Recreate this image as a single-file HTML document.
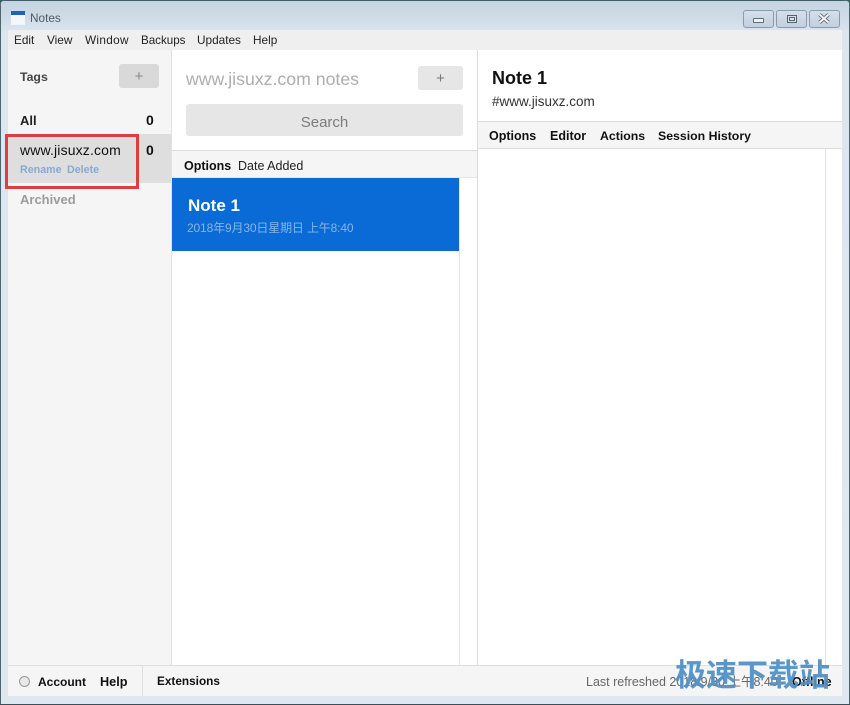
<!DOCTYPE html>
<html lang="en">
<head>
<meta charset="utf-8">
<title>Notes</title>
<style>
html,body{margin:0;padding:0;width:850px;height:705px;overflow:hidden;background:#37605f}
#w{position:relative;width:850px;height:705px;overflow:hidden;font-family:"Liberation Sans","Noto Sans CJK SC",sans-serif;color:#111;
background:linear-gradient(#c3d3e0 0,#d0dde8 20px,#dbe6ef 32px,#dfe8f1 100%);border-radius:6px 6px 0 0}
#w div{position:absolute;white-space:nowrap}
.t{line-height:1}
.b{font-weight:700}
.btn{background:#e6e6e6;border-radius:3px}
.wb{top:10px;height:16px;width:29px;border:1px solid #8b9bae;border-radius:3px;background:linear-gradient(#d4e0ea,#c2d0dd)}
.plus{color:#777;font-size:15px;line-height:1;text-align:center}
</style>
</head>
<body>
<div id="w">
  <div style="left:0;top:0;width:850px;height:1px;background:#3f5f63"></div>
  <div style="left:0;top:0;width:1px;height:705px;background:#4d6770"></div>
  <div style="left:849px;top:0;width:1px;height:705px;background:#4d6770"></div>
  <div style="left:0;top:704px;width:850px;height:1px;background:#3c4f58"></div>

  <div style="left:11px;top:11px;width:14px;height:4px;background:#1f62b4"></div>
  <div style="left:11px;top:15px;width:14px;height:10px;background:#f4f6f8"></div>
  <div class="t" style="left:30px;top:13px;font-size:11.8px;color:#4f5a65">Notes</div>

  <div class="wb" style="left:743px"></div>
  <div style="left:753px;top:18px;width:9px;height:3px;border:1px solid #5f6c78;background:#eef2f5;border-radius:1px"></div>
  <div class="wb" style="left:776px"></div>
  <div style="left:787px;top:15px;width:8px;height:6px;border:1px solid #55626e;background:#dbe4ec"></div>
  <div style="left:789px;top:17px;width:4px;height:2px;border:1px solid #55626e"></div>
  <div class="wb" style="left:809px"></div>
  <svg style="position:absolute;left:818px;top:13px" width="12" height="11" viewBox="0 0 12 11"><path d="M1.5 1.5L10.5 9.5M10.5 1.5L1.5 9.5" stroke="#5f6c78" stroke-width="3.8"/><path d="M1.5 1.5L10.5 9.5M10.5 1.5L1.5 9.5" stroke="#f2f5f7" stroke-width="1.9"/></svg>

  <div style="left:8px;top:30px;width:834px;height:20px;background:#efefef"></div>
  <div class="t" style="left:14px;top:35px;font-size:11.8px;color:#222">Edit</div>
  <div class="t" style="left:47px;top:35px;font-size:11.8px;color:#222">View</div>
  <div class="t" style="left:85px;top:35px;font-size:11.8px;color:#222;letter-spacing:.3px">Window</div>
  <div class="t" style="left:141px;top:35px;font-size:11.6px;color:#222">Backups</div>
  <div class="t" style="left:197px;top:35px;font-size:11.8px;color:#222">Updates</div>
  <div class="t" style="left:253px;top:35px;font-size:11.8px;color:#222">Help</div>

  <div style="left:8px;top:50px;width:834px;height:646px;background:#fff"></div>

  <!-- Tags column -->
  <div style="left:8px;top:50px;width:163px;height:615px;background:#f5f5f5;border-right:1px solid #e2e2e2"></div>
  <div class="t b" style="left:20px;top:71px;font-size:12.3px;color:#444">Tags</div>
  <div style="left:119px;top:64px;width:40px;height:24px;background:#d9d9d9;border-radius:3px"></div>
  <div class="plus" style="left:119px;top:69px;width:40px;color:#888">+</div>
  <div class="t b" style="left:20px;top:114px;font-size:13px;color:#222">All</div>
  <div class="t b" style="left:146px;top:113px;font-size:14px">0</div>
  <div style="left:8px;top:134px;width:163px;height:49px;background:#dedede"></div>
  <div class="t" style="left:20px;top:143px;font-size:14px;color:#111;letter-spacing:.15px">www.jisuxz.com</div>
  <div class="t b" style="left:146px;top:143px;font-size:14px">0</div>
  <div class="t b" style="left:20px;top:165px;font-size:10.7px;color:#8aa9d2">Rename</div>
  <div class="t b" style="left:67px;top:165px;font-size:10.7px;color:#8aa9d2">Delete</div>
  <div style="left:5px;top:134px;width:128px;height:49px;border:3px solid #dc3e42"></div>
  <div class="t b" style="left:20px;top:193px;font-size:13px;color:#9b9b9b">Archived</div>

  <!-- Notes column -->
  <div class="t" style="left:186px;top:71px;font-size:17.7px;color:#aeaeae">www.jisuxz.com notes</div>
  <div class="btn" style="left:418px;top:66px;width:45px;height:24px"></div>
  <div class="plus" style="left:418px;top:71px;width:45px">+</div>
  <div class="btn" style="left:186px;top:104px;width:277px;height:32px"></div>
  <div class="t" style="left:186px;top:115px;width:277px;text-align:center;font-size:15px;color:#7c7c7c">Search</div>
  <div style="left:172px;top:150px;width:305px;height:26px;background:#f5f5f5;border-top:1px solid #dedede;border-bottom:1px solid #e6e6e6"></div>
  <div class="t b" style="left:184px;top:160px;font-size:12.5px;color:#111">Options</div>
  <div class="t" style="left:238px;top:160px;font-size:12.5px;color:#222">Date Added</div>
  <div style="left:172px;top:178px;width:287px;height:73px;background:#0a6bd6"></div>
  <div class="t b" style="left:188px;top:197px;font-size:17px;color:#fff">Note 1</div>
  <div class="t" style="left:187px;top:222px;font-size:12px;color:#86b5e8;letter-spacing:-.15px">2018年9月30日星期日 上午8:40</div>
  <div style="left:459px;top:178px;width:1px;height:487px;background:#e6e6e6"></div>
  <div style="left:477px;top:50px;width:1px;height:615px;background:#dcdcdc"></div>

  <!-- Editor column -->
  <div class="t b" style="left:492px;top:69px;font-size:18px;color:#111">Note 1</div>
  <div class="t" style="left:492px;top:95px;font-size:13.5px;color:#333">#www.jisuxz.com</div>
  <div style="left:478px;top:121px;width:364px;height:26px;background:#f5f5f5;border-top:1px solid #dedede;border-bottom:1px solid #dedede"></div>
  <div class="t b" style="left:489px;top:130px;font-size:12.5px">Options</div>
  <div class="t b" style="left:550px;top:130px;font-size:12.5px">Editor</div>
  <div class="t b" style="left:600px;top:130px;font-size:12.3px">Actions</div>
  <div class="t b" style="left:658px;top:130px;font-size:12.3px">Session History</div>
  <div style="left:825px;top:149px;width:1px;height:516px;background:#e3e3e3"></div>

  <!-- Footer -->
  <div style="left:8px;top:665px;width:834px;height:31px;background:#f5f5f5;border-top:1px solid #dedede;box-sizing:border-box"></div>
  <div style="left:19px;top:676px;width:9px;height:9px;border:1px solid #999;border-radius:50%;background:#e8e8e8"></div>
  <div class="t b" style="left:38px;top:676px;font-size:12px">Account</div>
  <div class="t b" style="left:100px;top:676px;font-size:12.7px">Help</div>
  <div style="left:142px;top:666px;width:1px;height:30px;background:#dedede"></div>
  <div class="t b" style="left:157px;top:676px;font-size:11.8px">Extensions</div>
  <div class="t" style="left:586px;top:676px;font-size:12.5px;color:#666">Last refreshed 2018/9/30 上午8:40</div>
  <div class="t b" style="left:792px;top:676px;font-size:12.5px">Offline</div>
  <div class="t b" style="left:675px;top:657px;font-size:31px;color:#4f8fc4;opacity:.93;letter-spacing:0;font-family:'Noto Sans CJK SC','Liberation Sans',sans-serif">极速下载站</div>
</div>
</body>
</html>
